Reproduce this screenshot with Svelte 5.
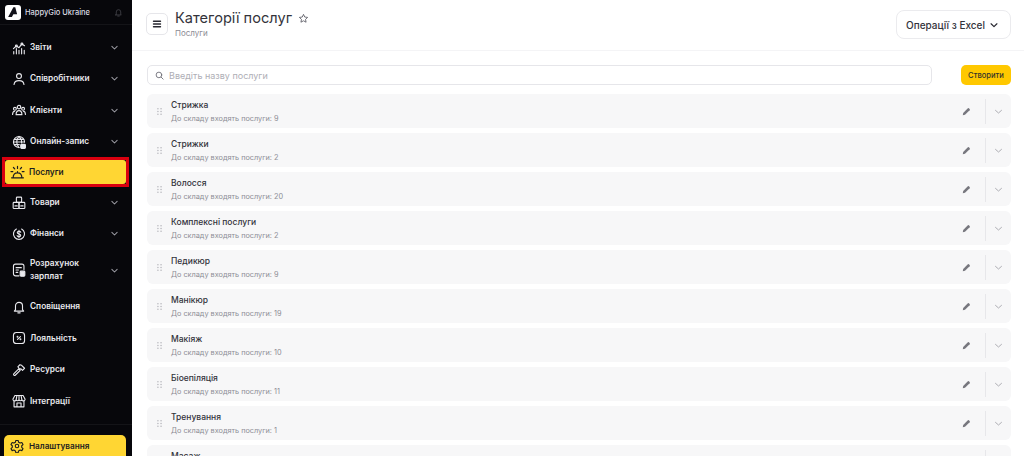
<script>
  const navItems = [
    { label: 'Звіти', icon: 'chart', arrow: true, h: 31 },
    { label: 'Співробітники', icon: 'user', arrow: true, h: 31 },
    { label: 'Клієнти', icon: 'users', arrow: true, h: 32 },
    { label: 'Онлайн-запис', icon: 'globe', arrow: true, h: 31 },
    { label: 'Послуги', icon: 'bell-desk', active: true, h: 30 },
    { label: 'Товари', icon: 'boxes', arrow: true, h: 31 },
    { label: 'Фінанси', icon: 'money', arrow: true, h: 31 },
    { label: 'Розрахунок зарплат', icon: 'payroll', arrow: true, h: 42 },
    { label: 'Сповіщення', icon: 'bell', h: 31 },
    { label: 'Лояльність', icon: 'percent', h: 32 },
    { label: 'Ресурси', icon: 'hammer', h: 31 },
    { label: 'Інтеграції', icon: 'shop', h: 32 }
  ];

  const categories = [
    ['Стрижка', 9],
    ['Стрижки', 2],
    ['Волосся', 20],
    ['Комплексні послуги', 2],
    ['Педикюр', 9],
    ['Манікюр', 19],
    ['Макіяж', 10],
    ['Біоепіляція', 11],
    ['Тренування', 1],
    ['Масаж', 4]
  ];
</script>

{#snippet navIcon(name)}
  <svg class="nav-icon" viewBox="0 0 24 24" fill="none" stroke="currentColor" stroke-width="1.9" stroke-linecap="round" stroke-linejoin="round">
    {#if name === 'chart'}
      <path d="M2.500 13l5-4.500 4.500 3 5-6.500 4.500 3" />
      <circle cx="7.500" cy="8.500" r="1.600" /><circle cx="17" cy="5" r="1.600" />
      <path d="M3 22v-4M7.500 22v-9M12 22v-6M16.500 22v-9M21 22v-6" />
    {:else if name === 'user'}
      <circle cx="12" cy="7" r="4.200" />
      <path d="M3.500 21.500c.4-4.800 3.800-6.800 8.500-6.800s8.100 2 8.500 6.800" />
    {:else if name === 'users'}
      <circle cx="12" cy="7" r="3" /><circle cx="5" cy="10" r="2.500" /><circle cx="19" cy="10" r="2.500" />
      <path d="M7 20c0-4.500 2-7 5-7s5 2.500 5 7zM1 19.500c0-3 1.300-5 3.500-5.300M23 19.500c0-3-1.300-5-3.500-5.300" />
    {:else if name === 'globe'}
      <path d="M21.500 12a9.500 9.500 0 1 0-9.500 9.500" />
      <path d="M2.500 12h19M12 2.500c-5.200 5-5.200 14 0 19M12 2.500c3.500 3.500 4.800 7.500 4.500 11M4 7.500h16M4 16.500h8.500" />
      <rect x="15" y="16" width="8" height="7" rx="1.500" fill="currentColor" />
    {:else if name === 'bell-desk'}
      <path d="M2.500 20.500h19M5 20.500c0-5 3-8 7-8s7 3 7 8M12 12.500v-2" />
      <path d="M12 2v3.500M5.500 4l2 2.300M18.500 4l-2 2.300M1.500 10.500h3M19.500 10.500h3" />
    {:else if name === 'boxes'}
      <rect x="7.500" y="2" width="9" height="9" rx="1.500" />
      <rect x="2" y="11" width="10" height="10.500" rx="1.500" />
      <rect x="12" y="11" width="10" height="10.500" rx="1.500" />
      <path d="M5 17h4M15 17h4" />
    {:else if name === 'money'}
      <path d="M7.500 3.500a9.500 9.500 0 1 0 9 0" />
      <path d="M15 9c-.5-1.200-1.500-1.800-3-1.800-1.800 0-3 .9-3 2.300 0 3.300 6 1.500 6 4.800 0 1.400-1.200 2.400-3 2.400-1.500 0-2.700-.7-3.200-2M12 5.500v13" />
    {:else if name === 'payroll'}
      <path d="M12 22H6a3.500 3.500 0 0 1-3.500-3.500v-13A3.500 3.500 0 0 1 6 2h11a3.500 3.500 0 0 1 3.500 3.500V11" />
      <path d="M7 8h9M7 12h4M7 16h3" />
      <rect x="14" y="14" width="8" height="8.500" rx="1.500" fill="currentColor" />
    {:else if name === 'bell'}
      <path d="M6 16.500V10a6 6 0 0 1 12 0v6.500l2 2.500H4z" />
      <path d="M10 22h4" />
    {:else if name === 'percent'}
      <rect x="2.500" y="2.500" width="19" height="19" rx="5" />
      <path d="M9.500 14.500l5-5" />
      <circle cx="9.500" cy="9.800" r=".7" /><circle cx="14.500" cy="14.200" r=".7" />
    {:else if name === 'hammer'}
      <path d="M3 18.500l8.500-8.500 2.500 2.500L5.500 21a1.800 1.800 0 0 1-2.500-2.500z" />
      <path d="M10 6.500l3.500-3.500 3 1 5 5-3.500 3.500-2.500-2.500-2.500.5z" />
    {:else if name === 'shop'}
      <path d="M5 2.500h14l3.500 6.500a3 3 0 0 1-5.500 1.500 3.500 3.500 0 0 1-5 0 3.500 3.500 0 0 1-5 0A3 3 0 0 1 1.500 9z" />
      <path d="M8.500 2.500L7 10.500M15.500 2.500l1.500 8M12 2.500v8" />
      <path d="M3.500 12.500V22h17v-9.500M8.500 22v-6.500h7V22" />
    {/if}
  </svg>
{/snippet}

<div class="page">
  <aside class="sidebar">
    <div class="brand">
      <div class="logo">
        <svg viewBox="0 0 16 16" width="12" height="12"><path d="M1.500 14.500 L8.500 1.500 H11 L13.500 11 H8.500 L6.500 14.500 Z" fill="#12121a" /></svg>
      </div>
      <span class="brand-name">HappyGio Ukraine</span>
      <svg class="brand-bell" viewBox="0 0 24 24" fill="none" stroke="currentColor" stroke-width="2" stroke-linecap="round" stroke-linejoin="round">
        <path d="M6 17V10.500a6 6 0 0 1 12 0V17l1.500 1.500h-15z" /><path d="M10 21.500h4" />
      </svg>
    </div>

    <nav class="nav">
      {#each navItems as item}
        <div class="nav-item" class:active={item.active} style="height: {item.h}px">
          {@render navIcon(item.icon)}
          <span class="nav-label">{item.label}</span>
          {#if item.arrow}
            <svg class="nav-arrow" viewBox="0 0 12 12" fill="none" stroke="currentColor" stroke-width="1.4" stroke-linecap="round" stroke-linejoin="round"><path d="M2.500 4.500 6 8l3.500-3.500" /></svg>
          {/if}
        </div>
      {/each}
    </nav>

    <div class="settings-wrap">
      <div class="settings">
        <svg class="nav-icon" viewBox="0 0 24 24" fill="none" stroke="currentColor" stroke-width="1.9" stroke-linecap="round" stroke-linejoin="round">
          <circle cx="12" cy="12" r="3" />
          <path d="M10 2.500h4l.7 3 2.600 1.500 3-.9 2 3.400-2.200 2.100v2.800l2.200 2.100-2 3.400-3-.9-2.600 1.500-.7 3h-4l-.7-3-2.600-1.500-3 .9-2-3.400 2.200-2.100v-2.800L1.700 9.500l2-3.400 3 .9L9.300 5.500z" />
        </svg>
        <span>Налаштування</span>
      </div>
    </div>
  </aside>

  <main class="main">
    <header class="header">
      <button class="menu-btn" aria-label="Меню">
        <svg viewBox="0 0 12 12" width="12" height="12" fill="none" stroke="#27272f" stroke-width="1.400" stroke-linecap="round"><path d="M2.500 3.200h7M2.500 6h7M2.500 8.800h7" /></svg>
      </button>
      <div class="title-block">
        <div class="title-row">
          <h1>Категорії послуг</h1>
          <svg class="star" viewBox="0 0 24 24" fill="none" stroke="#55555f" stroke-width="1.800" stroke-linejoin="round"><path d="M12 3l2.700 5.800 6.300.8-4.600 4.300 1.200 6.200L12 17l-5.600 3.100 1.200-6.200L3 9.600l6.300-.8z" /></svg>
        </div>
        <div class="crumb">Послуги</div>
      </div>
      <button class="excel-btn">
        Операції з Excel
        <svg viewBox="0 0 12 12" width="10" height="10" fill="none" stroke="#27272f" stroke-width="1.400" stroke-linecap="round" stroke-linejoin="round"><path d="M2.500 4.500 6 8l3.500-3.500" /></svg>
      </button>
    </header>

    <section class="content">
      <div class="toolbar">
        <div class="search">
          <svg viewBox="0 0 16 16" width="9" height="9" fill="none" stroke="#6f6f78" stroke-width="1.600" stroke-linecap="round"><circle cx="7" cy="7" r="5" /><path d="M11 11l3.500 3.500" /></svg>
          <span>Введіть назву послуги</span>
        </div>
        <button class="create-btn">Створити</button>
      </div>

      <div class="list">
        {#each categories as [name, count]}
          <div class="row">
            <svg class="grip" viewBox="0 0 6 9" width="5" height="7" fill="#b0b0b7">
              <circle cx="1" cy="1" r=".9" /><circle cx="5" cy="1" r=".9" />
              <circle cx="1" cy="4.500" r=".9" /><circle cx="5" cy="4.500" r=".9" />
              <circle cx="1" cy="8" r=".9" /><circle cx="5" cy="8" r=".9" />
            </svg>
            <div class="row-text">
              <div class="row-name">{name}</div>
              <div class="row-sub">До складу входять послуги: {count}</div>
            </div>
            <svg class="pencil" viewBox="0 0 12 12" width="9" height="9"><path d="M1 11l.6-3L7.800 1.800a1 1 0 0 1 1.400 0l1 1a1 1 0 0 1 0 1.400L4 10.400z" fill="#77777e" /></svg>
            <span class="divider"></span>
            <svg class="row-arrow" viewBox="0 0 12 12" width="9" height="9" fill="none" stroke="#a5a5ac" stroke-width="1.200" stroke-linecap="round" stroke-linejoin="round"><path d="M2 4.500 6 8l4-3.500" /></svg>
          </div>
        {/each}
      </div>
    </section>
  </main>
</div>

<style>
  :global(body) {
    margin: 0;
    background: #fff;
    overflow: hidden;
  }

  .page {
    display: flex;
    width: 1024px;
    height: 456px;
    overflow: hidden;
    font-family: Inter, "Noto Sans", sans-serif;
    color: #27272f;
  }

  /* sidebar */
  .sidebar {
    display: flex;
    flex-direction: column;
    flex: 0 0 132px;
    height: 456px;
    background: #07070b;
    color: #e9e9ee;
  }

  .brand {
    display: flex;
    align-items: center;
    flex: 0 0 24px;
    padding: 0 9px 0 5px;
    gap: 4px;
    border-bottom: 1px solid #141418;
  }

  .logo {
    display: flex;
    align-items: center;
    justify-content: center;
    width: 16px;
    height: 15px;
    background: #fff;
    border-radius: 3px;
  }

  .brand-name {
    flex: 1;
    font-size: 7.5px;
    font-weight: 500;
    color: #dcdce2;
  }

  .brand-bell {
    width: 9px;
    height: 9px;
    color: #4a4a50;
  }

  .nav {
    display: flex;
    flex-direction: column;
    padding-top: 7px;
    flex: 1;
  }

  .nav-item {
    display: flex;
    align-items: center;
    flex: none;
    margin: 0 4px;
    padding: 0 9px 0 8px;
    gap: 4px;
  }

  .nav-item.active {
    box-sizing: border-box;
    margin: 0 3px 0 2px;
    padding: 0 5px;
    border: 3px solid;
    border-image: linear-gradient(#d9000f, #d9000f) 1;
    border-radius: 6px;
    background: #ffd633;
    background-clip: padding-box;
    color: #1c1c20;
  }

  .nav-icon {
    flex: none;
    width: 14px;
    height: 14px;
  }

  .nav-item.active .nav-icon {
    width: 15px;
    height: 15px;
  }

  .nav-label {
    flex: 1;
    font-size: 8.3px;
    font-weight: 600;
    line-height: 13px;
  }

  .nav-arrow {
    flex: none;
    width: 9px;
    height: 9px;
    color: #9a9aa2;
  }

  .settings-wrap {
    flex: none;
    box-sizing: border-box;
    height: 32px;
    padding: 10px 6px 0 4px;
    border-top: 1px solid #141418;
  }

  .settings {
    display: flex;
    align-items: center;
    gap: 5px;
    height: 22px;
    padding: 0 6px;
    background: #ffd633;
    border-radius: 5px 5px 0 0;
    color: #1c1c20;
    font-size: 8.2px;
    font-weight: 600;
  }

  /* main */
  .main {
    flex: 1;
    min-width: 0;
    display: flex;
    flex-direction: column;
  }

  .header {
    display: flex;
    align-items: flex-start;
    flex: none;
    box-sizing: border-box;
    height: 51px;
    padding: 10px 13px 0 14px;
    gap: 7px;
    border-bottom: 1px solid #f4f4f6;
  }

  .menu-btn {
    display: flex;
    align-items: center;
    justify-content: center;
    width: 22px;
    height: 22px;
    margin-top: 3px;
    padding: 0;
    background: #fff;
    border: 1px solid #e6e6ea;
    border-radius: 5px;
  }

  .title-block {
    flex: 1;
  }

  .title-row {
    display: flex;
    align-items: center;
    gap: 6px;
    height: 16px;
  }

  h1 {
    margin: 0;
    font-size: 14.6px;
    font-weight: 400;
    line-height: 16px;
    color: #33333b;
  }

  .star {
    width: 11px;
    height: 11px;
  }

  .crumb {
    margin-top: 2px;
    font-size: 8px;
    line-height: 11px;
    color: #8b8b94;
  }

  .excel-btn {
    display: flex;
    align-items: center;
    gap: 4px;
    height: 29px;
    padding: 0 11px 0 9px;
    background: #fff;
    border: 1px solid #ebebee;
    border-radius: 8px;
    font-family: inherit;
    font-size: 10px;
    font-weight: 500;
    color: #33333b;
    white-space: nowrap;
  }

  .content {
    padding: 14px 13px 0 15px;
  }

  .toolbar {
    display: flex;
    align-items: center;
    gap: 29px;
    height: 20px;
  }

  .search {
    flex: 1;
    display: flex;
    align-items: center;
    gap: 5px;
    height: 20px;
    box-sizing: border-box;
    padding: 0 7px;
    border: 1px solid #e6e6ea;
    border-radius: 5px;
    font-size: 9px;
    color: #aeaeb5;
  }

  .create-btn {
    flex: none;
    width: 50px;
    height: 20px;
    padding: 0;
    background: #ffc800;
    border: none;
    border-radius: 5px;
    font-family: inherit;
    font-size: 7.6px;
    font-weight: 500;
    color: #33332b;
  }

  .list {
    display: flex;
    flex-direction: column;
    gap: 5px;
    margin-top: 9px;
  }

  .row {
    display: flex;
    align-items: center;
    flex: none;
    height: 34px;
    padding: 0 9px 0 10px;
    background: #f7f7f8;
    border-radius: 6px;
  }

  .grip {
    flex: none;
  }

  .row-text {
    flex: 1;
    margin-left: 9px;
  }

  .row-name {
    font-size: 8.5px;
    font-weight: 500;
    line-height: 12px;
    color: #33333b;
  }

  .row-sub {
    margin-top: 2px;
    font-size: 7.3px;
    line-height: 11px;
    color: #8d8d95;
  }

  .pencil {
    flex: none;
  }

  .divider {
    flex: none;
    width: 1px;
    height: 25px;
    margin: 0 8px 0 14px;
    background: #e7e7ea;
  }

  .row-arrow {
    flex: none;
    margin-right: -1px;
  }
</style>
